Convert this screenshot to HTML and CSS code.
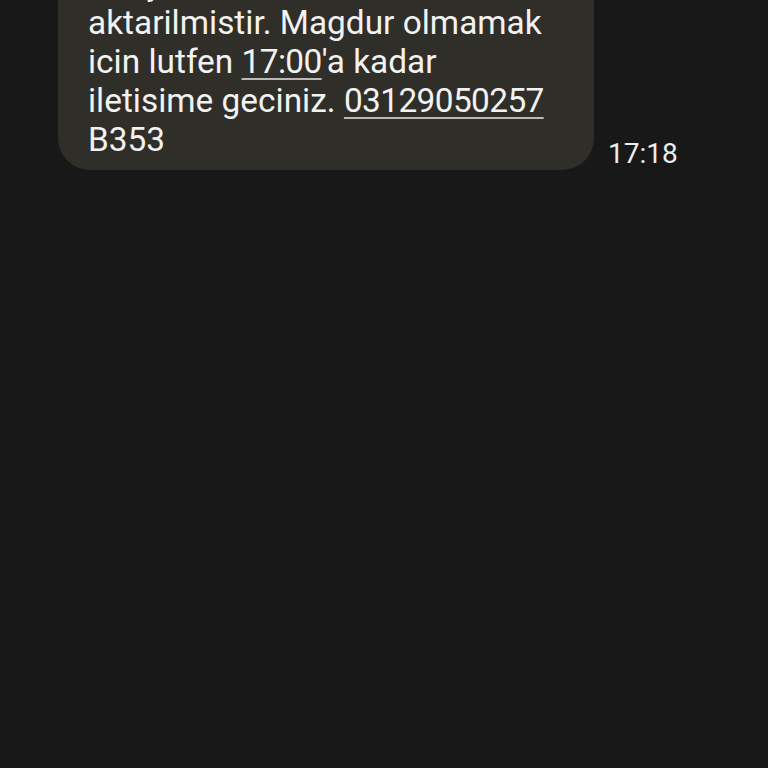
FILE: index.html
```html
<!DOCTYPE html>
<html>
<head>
<meta charset="utf-8">
<link rel="stylesheet" href="styles.css">
</head>
<body>
<div class="thread">
  <div class="row">
    <div class="bubble">
      <p class="msg">Dosyaniz icra birimine<br>aktarilmistir. Magdur olmamak<br>icin lutfen <span class="link">17:00</span>'a kadar<br>iletisime geciniz. <span class="link">03129050257</span><br>B353</p>
    </div>
    <div class="time">17:18</div>
  </div>
</div>
</body>
</html>
```

FILE: styles.css
```css
html, body {
  margin: 0;
  padding: 0;
  background: #181818;
  height: 100%;
  overflow: hidden;
}
body {
  font-family: Roboto, "Noto Sans", sans-serif;
  color: #f2f2f2;
}
.thread {
  margin-top: -60px;
  padding-left: 58px;
}
.row {
  display: flex;
  align-items: flex-end;
  gap: 14px;
}
.bubble {
  width: 536px;
  box-sizing: border-box;
  background: #2f2e29;
  border-radius: 32px;
  padding: 24px 20px 11px 30px;
}
.msg {
  margin: 0;
  font-size: 33.4px;
  line-height: 39px;
  white-space: nowrap;
}
.link {
  letter-spacing: -0.6px;
  text-decoration: underline;
  text-decoration-color: #b9b8b2;
  text-decoration-thickness: 2px;
  text-underline-offset: 5px;
}
.time {
  font-size: 28px;
  line-height: 28px;
  color: #ececec;
  padding-bottom: 2px;
}
```
